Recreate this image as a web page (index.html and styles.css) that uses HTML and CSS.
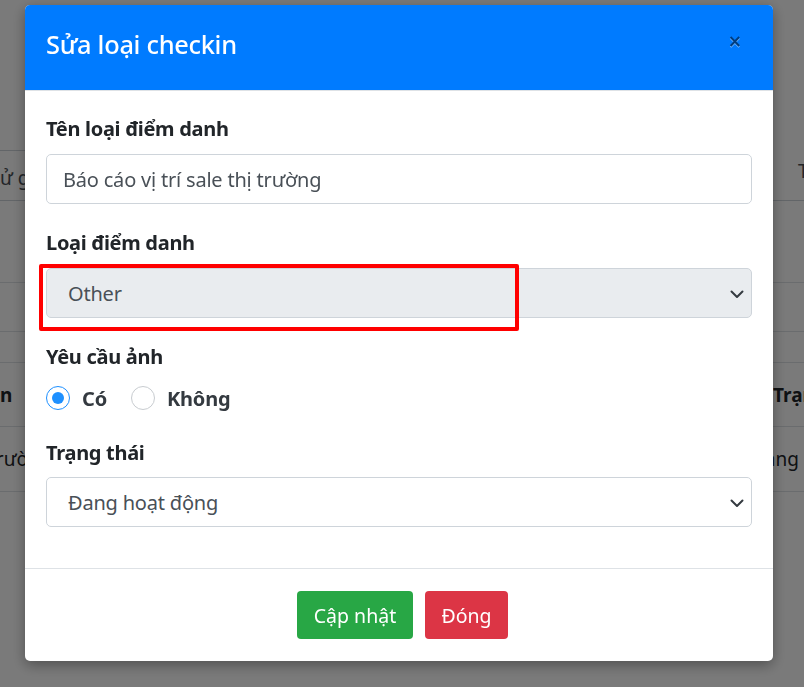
FILE: index.html
```html
<!DOCTYPE html>
<html lang="vi">
<head>
<meta charset="utf-8">
<title>Sửa loại checkin</title>
<link rel="stylesheet" href="styles.css">
</head>
<body>
<div class="page">
  <div class="filter-row">
    <div class="filter-input">sử gửi</div>
    <div class="filter-input right">Tất cả</div>
  </div>
  <div class="toolbar"></div>
  <div class="toolbar2"></div>
  <table class="table">
    <colgroup><col class="c1"><col class="c2"></colgroup>
    <thead>
      <tr><th>Tên</th><th class="r">Trạng thái</th></tr>
    </thead>
    <tbody>
      <tr><td>trường</td><td class="r">Đang hoạt động</td></tr>
    </tbody>
  </table>
</div>

<div class="backdrop"></div>

<div class="modal">
  <div class="modal-header">
    <h5 class="modal-title">Sửa loại checkin</h5>
    <button class="close" type="button">×</button>
  </div>
  <div class="modal-body">
    <div class="group">
      <label class="label">Tên loại điểm danh</label>
      <div class="control">Báo cáo vị trí sale thị trường</div>
    </div>
    <div class="group">
      <label class="label">Loại điểm danh</label>
      <div class="select-wrap">
        <div class="control select disabled">Other
          <svg class="chev" width="14" height="9" viewBox="0 0 14 9"><path d="M1.5 1.5 L7 7 L12.5 1.5" fill="none" stroke="#343a40" stroke-width="2" stroke-linecap="round" stroke-linejoin="round"/></svg>
        </div>
        <div class="highlight"></div>
      </div>
    </div>
    <div class="group">
      <label class="label">Yêu cầu ảnh</label>
      <div class="radios">
        <span class="radio checked"></span><span class="radio-text">Có</span>
        <span class="radio"></span><span class="radio-text">Không</span>
      </div>
    </div>
    <div class="group last">
      <label class="label tight">Trạng thái</label>
      <div class="control select">Đang hoạt động
        <svg class="chev" width="14" height="9" viewBox="0 0 14 9"><path d="M1.5 1.5 L7 7 L12.5 1.5" fill="none" stroke="#343a40" stroke-width="2" stroke-linecap="round" stroke-linejoin="round"/></svg>
      </div>
    </div>
  </div>
  <div class="modal-footer">
    <button class="btn btn-success" type="button">Cập nhật</button>
    <button class="btn btn-danger" type="button">Đóng</button>
  </div>
</div>
</body>
</html>
```

FILE: styles.css
```css
* { box-sizing: border-box; }
html, body { margin: 0; padding: 0; }
body {
  width: 804px;
  height: 687px;
  overflow: hidden;
  background: #fff;
  font-family: "Noto Sans", "Open Sans", "Liberation Sans", sans-serif;
  color: #212529;
}

/* background page */
.page { padding-top: 150px; }
.filter-row { display: flex; height: 51px; }
.filter-input {
  border: 1px solid #ced4da;
  border-left: none;
  padding-top: 14px;
  font-size: 19px;
  color: #495057;
  white-space: nowrap;
  overflow: hidden;
  width: 760px;
  text-indent: -9px;
}
.filter-input.right { width: 44px; text-indent: 0; padding-left: 38px; padding-top: 7px; border-top-color: transparent; border-right: none; }
.toolbar { height: 82px; border-bottom: 1px solid #dee2e6; }
.toolbar2 { height: 49px; border-bottom: 1px solid #dee2e6; }
.table { width: 804px; table-layout: fixed; border-collapse: collapse; margin-top: 30px; font-size: 19px; }
.c1 { width: 700px; }
.c2 { width: 104px; }
.table th, .table td {
  border-top: 1px solid #dee2e6;
  border-bottom: 1px solid #dee2e6;
  text-align: left;
  white-space: nowrap;
  overflow: hidden;
  padding: 0;
}
.table th { height: 64px; font-weight: 700; }
.table td { height: 65px; color: #212529; }
.table th:first-child { text-indent: -21px; }
.table td:first-child { text-indent: -11px; }
.table th.r { padding-left: 73px; }
.table td.r { padding-left: 51px; }

.backdrop {
  position: fixed;
  inset: 0;
  background: rgba(0, 0, 0, 0.52);
}

/* modal */
.modal {
  position: fixed;
  left: 25px;
  top: 5px;
  width: 748px;
  height: 656px;
  background: #fff;
  border-radius: 5px;
  overflow: hidden;
  box-shadow: 0 4px 14px rgba(0, 0, 0, 0.35);
  display: flex;
  flex-direction: column;
}
.modal-header {
  height: 86px;
  background: #007bff;
  display: flex;
  align-items: center;
  justify-content: space-between;
  padding: 0 31px 8px 21px;
  border-bottom: 1px solid #dee2e6;
}
.modal-title {
  margin: 0;
  color: #fff;
  font-size: 25.4px;
  font-weight: 500;
  letter-spacing: -0.3px;
}
.close {
  background: none;
  border: none;
  padding: 0;
  font-family: "DejaVu Sans", sans-serif;
  font-size: 17px;
  line-height: 1;
  font-weight: 700;
  color: #003d7f;
  text-shadow: 0 1px 0 rgba(255,255,255,0.45);
  margin-top: -4px;
}

.modal-body { padding: 24px 21px 0 21px; flex: 1; border-bottom: 1px solid #dee2e6; }
.group { margin-bottom: 25px; }
.label {
  display: block;
  font-size: 20px;
  font-weight: 700;
  line-height: 27px;
  margin-bottom: 12px;
  color: #212529;
  letter-spacing: -0.3px;
}
.label.tight { margin-bottom: 11px; }
.control {
  height: 50px;
  border: 1px solid #ced4da;
  border-radius: 5px;
  padding: 0 16px;
  display: flex;
  align-items: center;
  font-size: 20px;
  color: #495057;
  letter-spacing: -0.2px;
  background: #fff;
}
.select { padding-left: 21px; position: relative; }
.select.disabled { background: #e9ecef; }
.chev { position: absolute; right: 7px; top: 21px; }
.select-wrap { position: relative; }
.highlight {
  position: absolute;
  left: -7px;
  top: -4px;
  width: 480px;
  height: 67px;
  border: 4px solid #ff0000;
  border-radius: 2px;
}
.radios { display: flex; align-items: center; height: 32px; }
.radio {
  width: 24px;
  height: 24px;
  border-radius: 50%;
  border: 1px solid #c8ccd0;
  background: #fff;
  flex: 0 0 auto;
  position: relative;
}
.radio.checked { border: 1px solid #1e90ff; }
.radio.checked::after {
  content: "";
  position: absolute;
  left: 5px;
  top: 5px;
  width: 12px;
  height: 12px;
  border-radius: 50%;
  background: #1e90ff;
}
.radio-text {
  font-size: 20px;
  font-weight: 700;
  color: #343a40;
  margin-left: 12px;
  margin-right: 24px;
  letter-spacing: -0.2px;
}
.group.last { margin-bottom: 0; }

.modal-footer {
  height: 92px;
  display: flex;
  align-items: center;
  justify-content: center;
  gap: 12px;
  padding-left: 7px;
}
.btn {
  height: 48px;
  border: none;
  border-radius: 4px;
  color: #fff;
  font-family: inherit;
  font-size: 19.5px;
  padding: 0;
}
.btn-success { background: #28a745; width: 116px; }
.btn-danger { background: #dc3545; width: 83px; }
```
